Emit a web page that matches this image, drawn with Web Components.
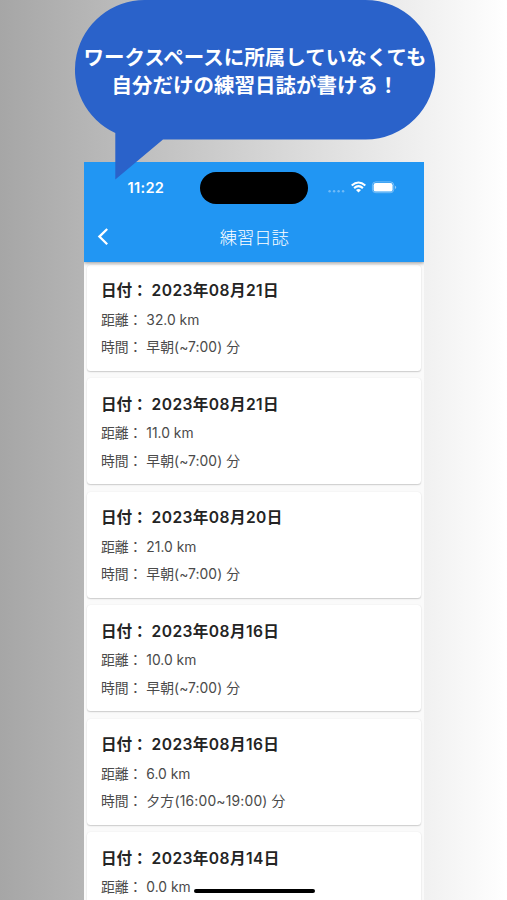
<!DOCTYPE html>
<html lang="ja">
<head>
<meta charset="utf-8">
<title>練習日誌</title>
<style>
html,body{margin:0;height:900px;overflow:hidden}
body{background:linear-gradient(90deg,#a6a6a6,#fff);font-family:Inter,"Noto Sans CJK JP",sans-serif}
</style>
</head>
<body>
<promo-page>
  <speech-bubble slot="bubble"><span>ワークスペースに所属していなくても</span><span slot="second">自分だけの練習日誌が書ける！</span></speech-bubble>
  <phone-screen>
    <app-header slot="header">練習日誌</app-header>
    <diary-card date="2023年08月21日" distance="32.0" time="早朝(~7:00)"></diary-card>
    <diary-card date="2023年08月21日" distance="11.0" time="早朝(~7:00)"></diary-card>
    <diary-card date="2023年08月20日" distance="21.0" time="早朝(~7:00)"></diary-card>
    <diary-card date="2023年08月16日" distance="10.0" time="早朝(~7:00)"></diary-card>
    <diary-card date="2023年08月16日" distance="6.0" time="夕方(16:00~19:00)" style="--track:.2px"></diary-card>
    <diary-card date="2023年08月14日" distance="0.0"></diary-card>
  </phone-screen>
</promo-page>
<script>
const define = (name, html, setup) => customElements.define(name, class extends HTMLElement {
  constructor() {
    super();
    this.attachShadow({ mode: "open" }).innerHTML = html;
  }
  connectedCallback() { if (setup) setup(this, this.shadowRoot); }
});

define("promo-page", `
<style>
:host{display:block;position:relative;height:900px;overflow:hidden;box-sizing:border-box;padding:162px 83px 0 83.5px}
.over{position:absolute;left:74px;top:0;z-index:2}
</style>
<div class="over"><slot name="bubble"></slot></div>
<slot></slot>`);

define("speech-bubble", `
<style>
:host{display:block;position:relative;width:362px;height:182px;color:#fff;font:700 20.5px/28px "Noto Sans CJK JP",sans-serif}
svg{position:absolute;inset:0}
.lines{position:relative;display:flex;flex-direction:column;align-items:center;padding-top:42px;white-space:nowrap}
</style>
<svg width="362" height="182" viewBox="0 0 362 182"><path fill="#2a62ca" d="M70.5 0H291.5A69.75 69.75 0 0 1 291.5 139.5H89L41.3 179.5V133A69.75 69.75 0 0 1 70.5 0Z"/></svg>
<div class="lines"><div><slot></slot></div><div><slot name="second"></slot></div></div>`);

define("phone-screen", `
<style>
:host{display:flex;flex-direction:column;position:relative;height:738px;background:#fafafa;overflow:hidden}
.list{display:flex;flex-direction:column;gap:7.4px;padding:3px 3.4px 0}
.home{position:absolute;left:110px;top:726.8px;width:121px;height:4.2px;border-radius:3px;background:#000}
</style>
<slot name="header"></slot>
<div class="list"><slot></slot></div>
<div class="home"></div>`);

define("status-bar", `
<style>
:host{display:grid;grid-template-columns:116px 108.5px 1fr;height:51px;align-items:center}
.time{font:600 14.6px/20px Inter,sans-serif;padding-left:44px;letter-spacing:.3px}
.island{height:32px;border-radius:16px;background:#000}
svg{display:block;margin-top:-1px}
</style>
<div class="time">11:22</div><div class="island"></div>
<svg width="115" height="20" viewBox="0 0 115 20" fill="#fff">
<g opacity=".35"><circle cx="21.6" cy="14.2" r="1.2"/><circle cx="26.1" cy="14.2" r="1.2"/><circle cx="30.6" cy="14.2" r="1.2"/><circle cx="35.1" cy="14.2" r="1.2"/></g>
<g transform="translate(.6)">
<g fill="none" stroke="#fff" stroke-width="2.1"><path d="M43.1 8.5Q49.9 2.5 56.7 8.5"/><path d="M45.5 11.1Q49.9 7.2 54.3 11.1"/></g>
<path d="M47.4 12.9Q49.9 10.9 52.4 12.9L49.9 15.5Z"/>
<rect x="63.8" y="4.9" width="21.4" height="10.8" rx="3.4" fill="none" stroke="#fff" stroke-opacity=".38"/>
<rect x="65" y="6" width="19" height="8.6" rx="2.2"/><path d="M86.4 8.7Q88.9 10.3 86.4 11.9Z" opacity=".5"/>
</g>
</svg>`);

define("app-header", `
<style>
:host{display:flex;flex-direction:column;position:relative;z-index:1;flex:none;height:99.7px;background:#2196f3;color:#fff;box-shadow:0 1.5px 3.5px rgba(0,0,0,.38)}
.bar{display:grid;grid-template-columns:40px 1fr 39px;align-items:center;height:48px}
.title{text-align:center;font:300 17.3px/24px "Noto Sans CJK JP",sans-serif}
svg{display:block;margin-left:12px}
</style>
<status-bar></status-bar>
<div class="bar"><svg width="16" height="20" viewBox="0 0 16 20"><path d="M11.2 2L3.4 9.6L11.2 17.2" fill="none" stroke="#fff" stroke-width="2.3"/></svg><div class="title"><slot></slot></div></div>`);

define("diary-card", `
<style>
:host{display:flex;flex-direction:column;box-sizing:border-box;height:106.1px;padding:14.8px 14px 0;border-radius:3.5px;background:#fff;box-shadow:0 1px 1.4px rgba(0,0,0,.18),0 0 1.5px rgba(0,0,0,.08);white-space:pre;flex:none}
div{font-size:13.85px;line-height:20px;height:20px;color:#4a4a4a;margin-bottom:7.7px}
.date{font-size:15.6px;font-weight:600;line-height:24px;height:24px;color:#242424;margin-bottom:6.2px}
#date{letter-spacing:.4px}
#time{letter-spacing:var(--track,.05px)}
</style>
<div class="date">日付： <span id="date"></span></div>
<div>距離： <span id="distance"></span> km</div>`, (host, root) => {
  if (host.hasAttribute("time") && !root.getElementById("time"))
    root.innerHTML += '<div>時間： <span id="time"></span> 分</div>';
  for (const key of ["date", "distance", "time"]) {
    const field = root.getElementById(key);
    if (field) field.textContent = host.getAttribute(key);
  }
});
</script>
</body>
</html>
